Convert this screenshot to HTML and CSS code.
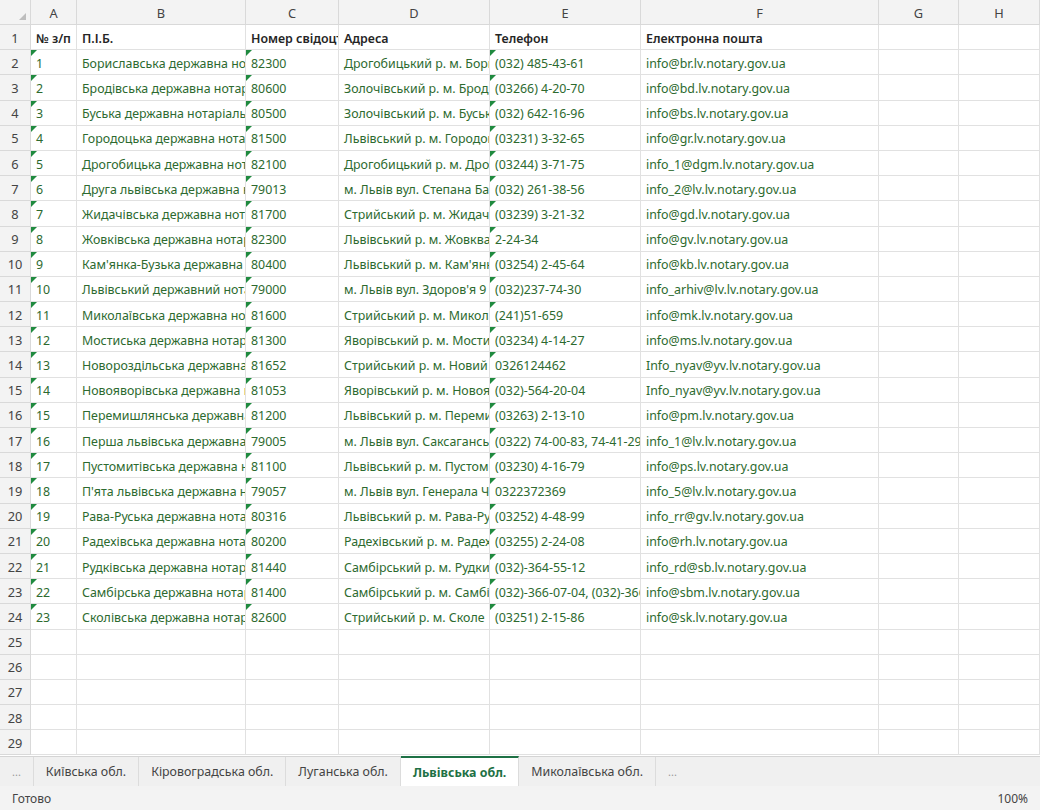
FILE: index.html
```html
<!DOCTYPE html>
<html lang="uk">
<head>
    <meta charset="UTF-8">
    <meta name="viewport" content="width=device-width, initial-scale=1.0">
    <title>Нотаріальні контори</title>
    <link rel="stylesheet" href="styles.css">
</head>
<body>
    <div class="app">
        <!-- Sheet grid, filled by the script below -->
        <div class="sheet" id="sheet"></div>

        <!-- Sheet tabs -->
        <div class="tabs">
            <div class="tab tab-more">...</div>
            <div class="tab">Київська обл.</div>
            <div class="tab">Кіровоградська обл.</div>
            <div class="tab">Луганська обл.</div>
            <div class="tab active">Львівська обл.</div>
            <div class="tab">Миколаївська обл.</div>
            <div class="tab tab-more">...</div>
        </div>

        <!-- Status bar -->
        <div class="status">
            <span>Готово</span>
            <span>100%</span>
        </div>
    </div>

    <script>
        const columns = ["A", "B", "C", "D", "E", "F", "G", "H"];
        const header = ["№ з/п", "П.І.Б.", "Номер свідоцтва", "Адреса", "Телефон", "Електронна пошта"];
        const rows = [
            ["Бориславська державна нотаріальна контора", "82300", "Дрогобицький р. м. Борислав", "(032) 485-43-61", "info@br.lv.notary.gov.ua"],
            ["Бродівська державна нотаріальна контора", "80600", "Золочівський р. м. Броди", "(03266) 4-20-70", "info@bd.lv.notary.gov.ua"],
            ["Буська державна нотаріальна контора", "80500", "Золочівський р. м. Буськ", "(032) 642-16-96", "info@bs.lv.notary.gov.ua"],
            ["Городоцька державна нотаріальна контора", "81500", "Львівський р. м. Городок", "(03231) 3-32-65", "info@gr.lv.notary.gov.ua"],
            ["Дрогобицька державна нотаріальна контора", "82100", "Дрогобицький р. м. Дрогобич", "(03244) 3-71-75", "info_1@dgm.lv.notary.gov.ua"],
            ["Друга львівська державна нотаріальна контора", "79013", "м. Львів вул. Степана Бандери", "(032) 261-38-56", "info_2@lv.lv.notary.gov.ua"],
            ["Жидачівська державна нотаріальна контора", "81700", "Стрийський р. м. Жидачів", "(03239) 3-21-32", "info@gd.lv.notary.gov.ua"],
            ["Жовківська державна нотаріальна контора", "82300", "Львівський р. м. Жовква", "2-24-34", "info@gv.lv.notary.gov.ua"],
            ["Кам'янка-Бузька державна нотаріальна контора", "80400", "Львівський р. м. Кам'янка-Бузька", "(03254) 2-45-64", "info@kb.lv.notary.gov.ua"],
            ["Львівський державний нотаріальний архів", "79000", "м. Львів вул. Здоров'я 9", "(032)237-74-30", "info_arhiv@lv.lv.notary.gov.ua"],
            ["Миколаївська державна нотаріальна контора", "81600", "Стрийський р. м. Миколаїв", "(241)51-659", "info@mk.lv.notary.gov.ua"],
            ["Мостиська державна нотаріальна контора", "81300", "Яворівський р. м. Мостиська", "(03234) 4-14-27", "info@ms.lv.notary.gov.ua"],
            ["Новороздільська державна нотаріальна контора", "81652", "Стрийський р. м. Новий Розділ", "0326124462", "Info_nyav@yv.lv.notary.gov.ua"],
            ["Новояворівська державна нотаріальна контора", "81053", "Яворівський р. м. Новояворівськ", "(032)-564-20-04", "Info_nyav@yv.lv.notary.gov.ua"],
            ["Перемишлянська державна нотаріальна контора", "81200", "Львівський р. м. Перемишляни", "(03263) 2-13-10", "info@pm.lv.notary.gov.ua"],
            ["Перша львівська державна нотаріальна контора", "79005", "м. Львів вул. Саксаганського", "(0322) 74-00-83, 74-41-29", "info_1@lv.lv.notary.gov.ua"],
            ["Пустомитівська державна нотаріальна контора", "81100", "Львівський р. м. Пустомити", "(03230) 4-16-79", "info@ps.lv.notary.gov.ua"],
            ["П'ята львівська державна нотаріальна контора", "79057", "м. Львів вул. Генерала Чупринки", "0322372369", "info_5@lv.lv.notary.gov.ua"],
            ["Рава-Руська державна нотаріальна контора", "80316", "Львівський р. м. Рава-Руська", "(03252) 4-48-99", "info_rr@gv.lv.notary.gov.ua"],
            ["Радехівська державна нотаріальна контора", "80200", "Радехівський р. м. Радехів", "(03255) 2-24-08", "info@rh.lv.notary.gov.ua"],
            ["Рудківська державна нотаріальна контора", "81440", "Самбірський р. м. Рудки", "(032)-364-55-12", "info_rd@sb.lv.notary.gov.ua"],
            ["Самбірська державна нотаріальна контора", "81400", "Самбірський р. м. Самбір", "(032)-366-07-04, (032)-366-07-05", "info@sbm.lv.notary.gov.ua"],
            ["Сколівська державна нотаріальна контора", "82600", "Стрийський р. м. Сколе", "(03251) 2-15-86", "info@sk.lv.notary.gov.ua"]
        ];
        const totalRows = 29;

        const sheet = document.getElementById("sheet");

        function addCell(text, className) {
            const cell = document.createElement("div");
            cell.className = "cell " + className;
            cell.textContent = text;
            sheet.appendChild(cell);
        }

        // column letters
        addCell("", "corner");
        columns.forEach(letter => addCell(letter, "col-head"));

        for (let r = 1; r <= totalRows; r++) {
            addCell(r, "row-head");
            let values = [];
            if (r === 1) {
                values = header;
            } else if (r - 2 < rows.length) {
                values = [String(r - 1)].concat(rows[r - 2]);
            }
            for (let c = 0; c < columns.length; c++) {
                let cls = r === 1 ? "title" : "data";
                // numbers stored as text get the green marker (A, C, E)
                if (r > 1 && values[c] && (c === 0 || c === 2 || c === 4)) {
                    cls += " marked";
                }
                addCell(values[c] || "", cls);
            }
        }
    </script>
</body>
</html>
```

FILE: styles.css
```css
/* General styling */
body {
    margin: 0;
    padding: 0;
    font-family: 'Noto Sans', 'Open Sans', sans-serif;
    background: #fff;
}
.app {
    width: 1040px;
    height: 810px;
    display: flex;
    flex-direction: column;
    overflow: hidden;
}

/* Sheet grid */
.sheet {
    height: 757px;
    display: grid;
    grid-template-columns: 31px 46px 169px 93px 151px 151px 238px 80px 81px;
    grid-template-rows: 25px;
    grid-auto-rows: 25.2px;
    overflow: hidden;
}
.cell {
    position: relative;
    display: flex;
    align-items: center;
    padding: 2px 0 0 5px;
    border-right: 1px solid #e1e1e1;
    border-bottom: 1px solid #e1e1e1;
    font-size: 12.4px;
    white-space: nowrap;
    overflow: hidden;
}
.corner,
.col-head,
.row-head {
    background-color: #f3f3f3;
    border-color: #d9d9d9;
    color: #444;
    justify-content: center;
    padding: 1px 0 0 0;
    font-size: 12.8px;
}
.corner::after {
    content: "";
    position: absolute;
    right: 4px;
    bottom: 4px;
    border-bottom: 7px solid #bdbdbd;
    border-left: 7px solid transparent;
}
.title {
    font-weight: 600;
    color: #252525;
}
.data {
    color: #2d6a2f;
}
.marked::before {
    content: "";
    position: absolute;
    top: 0;
    left: 0;
    border-top: 6px solid #1f8a3f;
    border-right: 6px solid transparent;
}

/* Sheet tabs */
.tabs {
    height: 29px;
    display: flex;
    background-color: #f0f0f0;
    border-top: 1px solid #d4d4d4;
    font-size: 12.4px;
    color: #444;
}
.tab {
    display: flex;
    align-items: center;
    padding: 0 12px;
    border-right: 1px solid #dcdcdc;
}
.tab-more {
    color: #999;
    padding: 0 12px;
    font-size: 11px;
}
.tab-more:last-child {
    border-right: none;
}
.tab.active {
    background-color: #fff;
    border-top: 2px solid #1e7145;
    margin-top: -1px;
    color: #1e7145;
    font-weight: bold;
}

/* Status bar */
.status {
    height: 24px;
    display: flex;
    justify-content: space-between;
    align-items: center;
    padding: 0 12px;
    background-color: #f3f3f3;
    font-size: 12px;
    color: #444;
}
```
